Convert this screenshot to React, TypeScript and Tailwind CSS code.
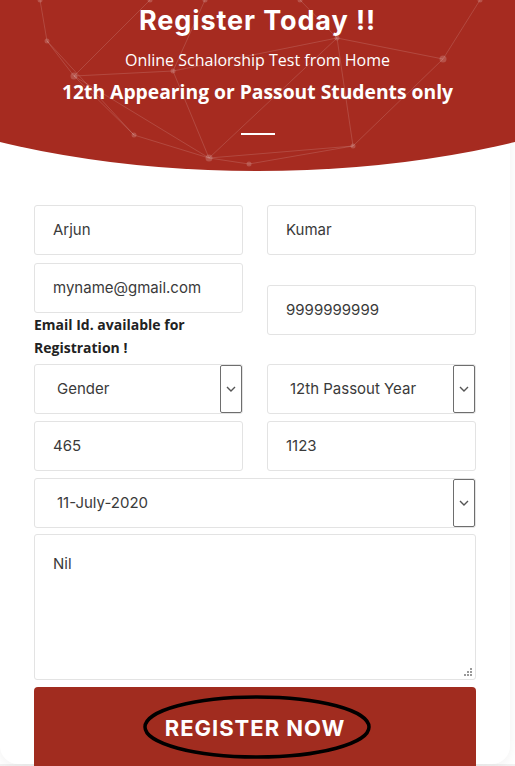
import React from 'react';

const NODES: [number, number][] = [
  [47, 41], [74, 76], [173, 71], [134, 135], [209, 158], [249, 164],
  [337, 38], [443, 59], [353, 146], [40, 0], [205, 0], [300, 0], [480, 0], [150, 0],
];

const LINKS: [number, number][] = [
  [0, 1], [0, 9], [1, 4], [1, 2], [1, 3], [2, 6], [6, 7], [7, 8], [8, 4],
  [4, 3], [3, 0], [4, 6], [5, 8], [7, 12], [6, 11], [2, 10], [1, 13], [4, 5], [2, 4], [6, 8],
];

function Network() {
  return (
    <svg className="absolute inset-0 w-full h-full" viewBox="0 0 515 171" preserveAspectRatio="none">
      {LINKS.map(([a, b], i) => (
        <line
          key={i}
          x1={NODES[a][0]}
          y1={NODES[a][1]}
          x2={NODES[b][0]}
          y2={NODES[b][1]}
          stroke="rgba(255,255,255,0.14)"
          strokeWidth="1"
        />
      ))}
      {NODES.map(([x, y], i) => (
        <circle key={i} cx={x} cy={y} r={i === 4 || i === 7 || i === 1 ? 3.5 : 2.5} fill="rgba(255,255,255,0.18)" />
      ))}
    </svg>
  );
}

const field =
  'h-[50px] w-full rounded-[3px] border border-[#e3e3e3] bg-white px-[18px] flex items-center text-[15px] text-[#3a3a3a]';

function Input({ value, className = '' }: { value: string; className?: string }) {
  return <div className={`${field} ${className}`}>{value}</div>;
}

function Select({ value }: { value: string }) {
  return (
    <div className="relative h-[50px] w-full rounded-[3px] border border-[#e3e3e3] bg-white flex items-center pl-[22px] text-[15px] text-[#3a3a3a]">
      <span>{value}</span>
      <div className="absolute right-0 top-0 bottom-0 w-[22px] border border-[#6e6e6e] rounded-[2px] bg-white flex items-center justify-center">
        <svg width="10" height="6" viewBox="0 0 10 6">
          <path d="M1 1l4 4 4-4" fill="none" stroke="#555" strokeWidth="1.4" />
        </svg>
      </div>
    </div>
  );
}

export default function App() {
  return (
    <div className="w-[515px] h-[766px] overflow-hidden bg-white" style={{ fontFamily: 'Inter, "Open Sans", sans-serif' }}>
      <div className="w-[510px] bg-white rounded-b-[18px] shadow-[0_2px_12px_rgba(0,0,0,0.06)] relative z-10">
        {/* Header */}
        <div className="relative h-[171px] overflow-hidden w-[515px]">
          <div className="absolute left-[-250px] top-[-249px] w-[1015px] h-[420px] rounded-[50%] bg-[#a62b20]" />
          <Network />
          <div className="relative flex flex-col items-center text-white">
            <h1 className="text-[27px] font-bold leading-none mt-[7px] tracking-[0.9px]">Register Today !!</h1>
            <p className="mt-[18px] text-[16px] leading-none" style={{ fontFamily: '"Open Sans", sans-serif' }}>
              Online Schalorship Test from Home
            </p>
            <p className="mt-[14px] text-[19.3px] font-bold leading-none" style={{ fontFamily: '"Open Sans", sans-serif' }}>
              12th Appearing or Passout Students only
            </p>
            <div className="mt-[32px] w-[34px] h-[1.5px] bg-white" />
          </div>
        </div>

        {/* Form */}
        <div className="px-[34px] pt-[34px] flex flex-col gap-[7px]">
          <div className="grid grid-cols-2 gap-x-6">
            <Input value="Arjun" />
            <Input value="Kumar" />
          </div>
          <div className="grid grid-cols-2 gap-x-6 mt-[1px]">
            <div>
              <Input value="myname@gmail.com" className="h-[49px]" />
              <p className="text-[14px] font-bold leading-[23px] text-[#222]" style={{ fontFamily: '"Open Sans", sans-serif' }}>
                Email Id. available for
                <br />
                Registration !
              </p>
            </div>
            <div className="pt-[22px]">
              <Input value="9999999999" />
            </div>
          </div>
          <div className="grid grid-cols-2 gap-x-6 -mt-[2px]">
            <Select value="Gender" />
            <Select value="12th Passout Year" />
          </div>
          <div className="grid grid-cols-2 gap-x-6">
            <Input value="465" />
            <Input value="1123" />
          </div>
          <Select value="11-July-2020" />
          <div className="relative h-[146px] -mt-[1px] rounded-[3px] border border-[#e3e3e3] bg-white px-[18px] pt-[18px] text-[15px] text-[#3a3a3a]">
            Nil
            <svg className="absolute right-[3px] bottom-[3px]" width="10" height="10" viewBox="0 0 10 10">
              <rect x="8" y="2" width="2" height="2" fill="#999" />
              <rect x="5" y="5" width="2" height="2" fill="#999" />
              <rect x="8" y="5" width="2" height="2" fill="#999" />
              <rect x="2" y="8" width="2" height="2" fill="#999" />
              <rect x="5" y="8" width="2" height="2" fill="#999" />
              <rect x="8" y="8" width="2" height="2" fill="#999" />
            </svg>
          </div>
          <button className="relative z-20 -mb-[45px] h-[84px] rounded-[4px] bg-[#a12c1f] text-white text-[22px] font-bold tracking-[1px] flex items-start justify-center pt-[30px]">
            <span className="relative leading-none">
              REGISTER NOW
              <svg className="absolute left-[-24px] top-[-23px]" width="232" height="66" viewBox="0 0 232 66">
                <ellipse cx="116" cy="33" rx="112" ry="30" fill="none" stroke="#000" strokeWidth="3.5" />
              </svg>
            </span>
          </button>
        </div>
        <div className="h-[38px]" />
      </div>
      <div className="h-[60px] bg-gradient-to-b from-[#f1f1f1] to-white" />
    </div>
  );
}
